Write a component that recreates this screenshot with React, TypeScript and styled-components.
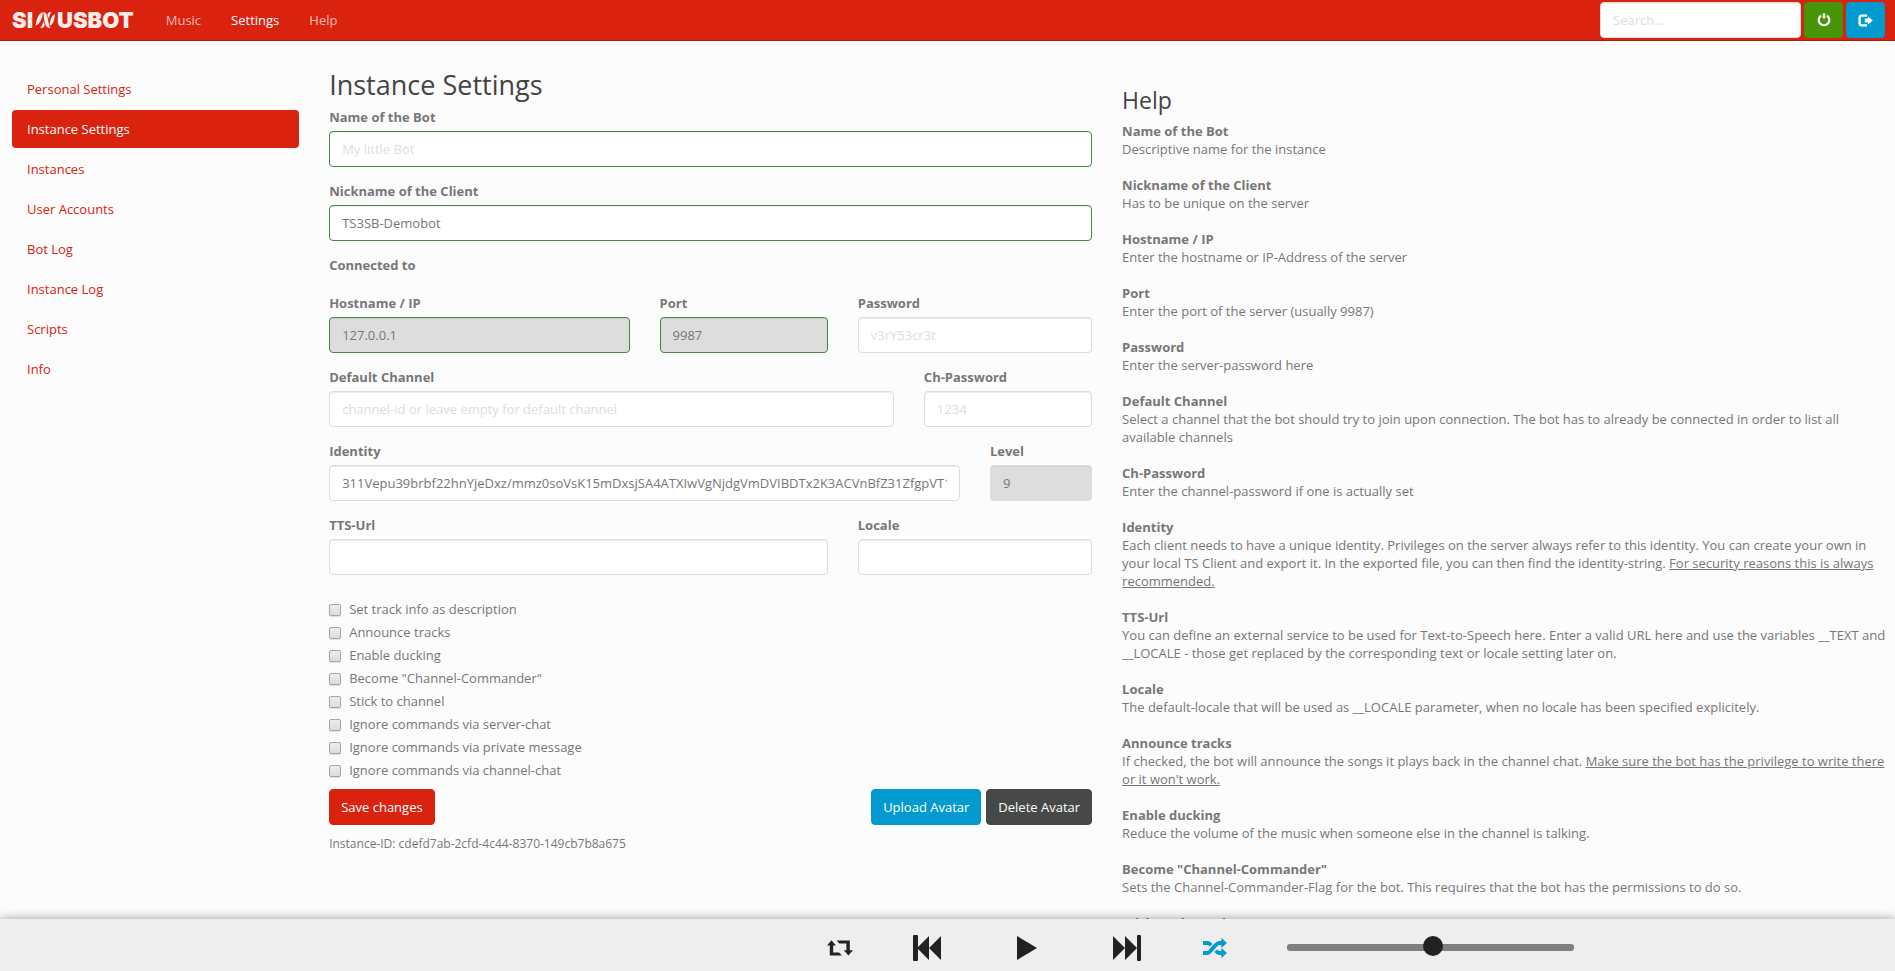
import React, { useState } from "react";
import styled, { createGlobalStyle, css } from "styled-components";

const color = {
  red: "#d9230f",
  redDark: "#a91b0c",
  green: "#469408",
  blue: "#029acf",
  dark: "#474949",
  text: "#777777",
  heading: "#444444",
  line: "#dddddd",
  valid: "#468847",
  ink: "#222222",
};

const GlobalStyle = createGlobalStyle`
  *, *::before, *::after { box-sizing: border-box; }
  body {
    margin: 0;
    background: #fcfcfc;
    color: ${color.text};
    font-family: "Open Sans", "Liberation Sans", sans-serif;
    font-size: 13px;
    line-height: 18px;
  }
  button, input { font: inherit; }
`;

const Page = styled.div`
  display: flex;
  flex-direction: column;
  height: 100vh;
`;

const Header = styled.header`
  display: flex;
  align-items: center;
  flex: none;
  padding: 2px 10px 2px 12px;
  background: ${color.red};
  border-bottom: 1px solid ${color.redDark};
`;

const Logo = styled.a`
  display: flex;
  align-items: center;
  gap: 2px;
  margin-right: 32px;
  color: #fdeeec;
  font-family: Inter, "Open Sans", sans-serif;
  font-size: 22px;
  font-weight: 900;
  line-height: 22px;
  text-decoration: none;
`;

const Nav = styled.nav`
  display: flex;
  flex: 1;
  gap: 30px;
`;

const NavLink = styled.a<{ $active?: boolean }>`
  color: ${(p) => (p.$active ? "#ffffff" : "#f7bdb7")};
  text-decoration: none;
`;

const Tools = styled.form`
  display: flex;
  gap: 3px;
`;

const Input = styled.input<{ $valid?: boolean }>`
  display: block;
  width: 100%;
  height: 36px;
  padding: 8px 12px;
  background: #ffffff;
  border: 1px solid ${(p) => (p.$valid ? color.valid : color.line)};
  border-radius: 4px;
  box-shadow: inset 0 1px 1px rgba(0, 0, 0, 0.075);
  color: ${color.text};
  outline: none;
  &::placeholder {
    color: #dddddd;
    opacity: 1;
  }
  &:disabled {
    background: #dddddd;
  }
`;

const SearchInput = styled(Input)`
  width: 201px;
`;

const buttonColors = {
  primary: color.red,
  success: color.green,
  info: color.blue,
  plain: color.dark,
};

const Button = styled.button<{ $kind: keyof typeof buttonColors }>`
  height: 36px;
  padding: 8px 11px;
  background: ${(p) => buttonColors[p.$kind]};
  border: 1px solid ${(p) => buttonColors[p.$kind]};
  border-radius: 4px;
  color: #ffffff;
  cursor: pointer;
`;

const IconButton = styled(Button)`
  display: flex;
  align-items: center;
  justify-content: center;
  width: 39px;
  padding: 0;
`;

const Main = styled.main`
  display: grid;
  grid-template-columns: repeat(12, minmax(0, 1fr));
  column-gap: 30px;
  align-items: start;
  flex: 1;
  min-height: 0;
  padding: 29px 10px 0 12px;
  overflow-y: auto;
  scrollbar-width: none;
`;

const Sidebar = styled.nav`
  grid-column: span 2;
  display: flex;
  flex-direction: column;
  gap: 2px;
`;

const Pill = styled.a<{ $active?: boolean }>`
  padding: 10px 15px;
  border-radius: 4px;
  color: ${color.red};
  text-decoration: none;
  ${(p) =>
    p.$active &&
    css`
      background: ${color.red};
      color: #ffffff;
    `}
`;

const Content = styled.section`
  grid-column: span 5;
`;

const Title = styled.h1`
  margin: 0 0 8px;
  color: ${color.heading};
  font-size: 27px;
  font-weight: 400;
  line-height: 30px;
`;

const Form = styled.form`
  display: flex;
  flex-direction: column;
  gap: 15px;
`;

const FieldRow = styled.div`
  display: grid;
  grid-template-columns: repeat(12, minmax(0, 1fr));
  column-gap: 30px;
`;

const FieldBox = styled.div<{ $span: number }>`
  grid-column: span ${(p) => p.$span};
`;

const Label = styled.label`
  display: block;
  margin-bottom: 5px;
  font-weight: 700;
`;

const GroupHeading = styled.div`
  margin-bottom: 5px;
  font-weight: 700;
`;

const Checks = styled.div`
  display: flex;
  flex-direction: column;
  align-items: flex-start;
  gap: 5px;
  margin-top: 10px;
`;

const CheckLabel = styled.label`
  display: flex;
  align-items: center;
  gap: 8px;
`;

const Checkbox = styled.input`
  appearance: none;
  width: 12px;
  height: 12px;
  margin: 2px 0 0;
  background: linear-gradient(#ededed, #dcdcdc);
  border: 1px solid #a6a6a6;
  border-radius: 2px;
  box-shadow: 0 1px 1px rgba(0, 0, 0, 0.12);
  &:checked {
    background: ${color.text};
  }
`;

const Actions = styled.div`
  display: flex;
  gap: 5px;
  margin: 10px 0;
`;

const Spacer = styled.span`
  flex: 1;
`;

const InstanceId = styled.div`
  font-size: 12px;
`;

const HelpPanel = styled.aside`
  grid-column: span 5;
  margin-right: -10px;
  padding-top: 18px;
`;

const HelpTitle = styled.h2`
  margin: 0 0 10px;
  color: ${color.heading};
  font-size: 23px;
  font-weight: 400;
  line-height: 24px;
`;

const HelpList = styled.dl`
  margin: 0;
`;

const HelpTerm = styled.dt`
  font-weight: 700;
`;

const HelpText = styled.dd`
  margin: 0 0 18px;
`;

const Player = styled.footer`
  position: relative;
  display: grid;
  grid-template-columns: 5fr auto 2fr;
  flex: none;
  height: 52px;
  background: #eeeeee;
  box-shadow: 0 0 10px rgba(0, 0, 0, 0.4);
`;

const Controls = styled.div`
  grid-column: 2;
  display: flex;
  align-items: center;
`;

const PlayerButton = styled.button<{ $wide?: boolean; $on?: boolean }>`
  display: flex;
  align-items: center;
  justify-content: center;
  width: ${(p) => (p.$wide ? 100 : 75)}px;
  height: 52px;
  padding: 6px 0 0;
  background: none;
  border: 0;
  color: ${(p) => (p.$on ? color.blue : color.ink)};
  cursor: pointer;
`;

const Volume = styled.input`
  appearance: none;
  width: 287px;
  height: 20px;
  margin: 4px 0 0 35px;
  background: none;
  &::-webkit-slider-runnable-track {
    height: 7px;
    background: #808080;
    border-radius: 3px;
  }
  &::-webkit-slider-thumb {
    appearance: none;
    width: 20px;
    height: 20px;
    margin-top: -8px;
    background: ${color.ink};
    border-radius: 50%;
  }
`;

type FieldProps = {
  id: string;
  label: string;
  span?: number;
  value?: string;
  placeholder?: string;
  valid?: boolean;
  disabled?: boolean;
};

function Field({ id, label, span = 12, value = "", placeholder, valid, disabled }: FieldProps) {
  return (
    <FieldBox $span={span}>
      <Label htmlFor={id}>{label}</Label>
      <Input
        id={id}
        type="text"
        defaultValue={value}
        placeholder={placeholder}
        disabled={disabled}
        $valid={valid}
      />
    </FieldBox>
  );
}

const PowerIcon = () => (
  <svg width="14" height="14" viewBox="0 0 14 14" fill="none" stroke="currentColor" strokeWidth="2.2">
    <path d="M4 2.6A5.3 5.3 0 1 0 10 2.6" />
    <path d="M7 0.3V5.4" strokeWidth="2.6" />
  </svg>
);

const SignOutIcon = () => (
  <svg width="15" height="13" viewBox="0 0 15 13" fill="currentColor">
    <path d="M9 1.6H3.4A2 2 0 0 0 1.6 3.4V9.6A2 2 0 0 0 3.4 11.4H9" fill="none" stroke="currentColor" strokeWidth="2.4" />
    <path d="M6.8 4.4H10V2.4L14.8 6.5L10 10.6V8.6H6.8Z" />
  </svg>
);

const RepeatIcon = () => (
  <svg width="26" height="16" viewBox="0 0 26 16" fill="currentColor">
    <path d="M4.5 0.2L9 5.4H6.2V12.4H12L15 15.4H2.8V5.4H0Z" />
    <path d="M9.6 0.4H22.8V10.2H26L21.4 15.4L16.8 10.2H19.4V3.4H12.4Z" />
  </svg>
);

const PreviousIcon = () => (
  <svg width="28" height="26" viewBox="0 0 28 26" fill="currentColor">
    <rect width="5" height="26" rx="1" />
    <path d="M4 13L16 1V25ZM16 13L28 1V25Z" />
  </svg>
);

const PlayIcon = () => (
  <svg width="20" height="24" viewBox="0 0 20 24" fill="currentColor">
    <path d="M0 0L20 12L0 24Z" />
  </svg>
);

const NextIcon = () => (
  <svg width="28" height="26" viewBox="0 0 28 26" fill="currentColor">
    <rect x="24" width="4" height="26" rx="1" />
    <path d="M24 13L12 1V25ZM12 13L0 1V25Z" />
  </svg>
);

const ShuffleIcon = () => (
  <svg width="24" height="20" viewBox="0 0 24 20" fill="none" stroke="currentColor" strokeWidth="4">
    <path d="M0 15H4.6C7.6 15 12.4 5 16 5H19.5" />
    <path d="M0 5H4.6C6 5 7 5.8 8.2 7.2M12.8 12.6C13.8 14 14.8 15 16 15H19.5" />
    <path d="M18.4 0L24 5L18.4 10ZM18.4 10L24 15L18.4 20Z" fill="currentColor" stroke="none" />
  </svg>
);

const WaveIcon = () => (
  <svg width="20" height="18" viewBox="0 0 20 18" fill="currentColor">
    <path d="M0.6 14.8C1 9.6 3 3 7.6 1C8 5.4 5.6 13 0.6 14.8Z" />
    <path d="M8.2 1.2C12 1 12.6 6 13.2 9.4C13.8 12.8 14 15.4 15.6 16.8C11.4 17.8 10.2 13.4 9.4 10C8.8 6.8 8.8 3.6 8.2 1.2Z" />
    <path d="M5.2 16.8C7 15.4 7.8 12.6 8.4 10L9.8 14.4C9 16.4 7.4 17.2 5.2 16.8Z" />
    <path d="M12.4 3.8C13 1.8 14.2 0.8 16.2 1.2C14.8 3.2 14.4 5.6 13.8 8Z" />
    <path d="M14.6 15C14.6 10.6 16.2 5 19.8 3C20 8 18.2 13.6 14.6 15Z" />
  </svg>
);

const sections = [
  "Personal Settings",
  "Instance Settings",
  "Instances",
  "User Accounts",
  "Bot Log",
  "Instance Log",
  "Scripts",
  "Info",
];

const options = [
  "Set track info as description",
  "Announce tracks",
  "Enable ducking",
  'Become "Channel-Commander"',
  "Stick to channel",
  "Ignore commands via server-chat",
  "Ignore commands via private message",
  "Ignore commands via channel-chat",
];

const help: { term: string; text: string; important?: string }[] = [
  { term: "Name of the Bot", text: "Descriptive name for the instance" },
  { term: "Nickname of the Client", text: "Has to be unique on the server" },
  { term: "Hostname / IP", text: "Enter the hostname or IP-Address of the server" },
  { term: "Port", text: "Enter the port of the server (usually 9987)" },
  { term: "Password", text: "Enter the server-password here" },
  {
    term: "Default Channel",
    text: "Select a channel that the bot should try to join upon connection. The bot has to already be connected in order to list all available channels",
  },
  { term: "Ch-Password", text: "Enter the channel-password if one is actually set" },
  {
    term: "Identity",
    text: "Each client needs to have a unique identity. Privileges on the server always refer to this identity. You can create your own in your local TS Client and export it. In the exported file, you can then find the identity-string. ",
    important: "For security reasons this is always recommended.",
  },
  {
    term: "TTS-Url",
    text: "You can define an external service to be used for Text-to-Speech here. Enter a valid URL here and use the variables __TEXT and __LOCALE - those get replaced by the corresponding text or locale setting later on.",
  },
  {
    term: "Locale",
    text: "The default-locale that will be used as __LOCALE parameter, when no locale has been specified explicitely.",
  },
  {
    term: "Announce tracks",
    text: "If checked, the bot will announce the songs it plays back in the channel chat. ",
    important: "Make sure the bot has the privilege to write there or it won't work.",
  },
  {
    term: "Enable ducking",
    text: "Reduce the volume of the music when someone else in the channel is talking.",
  },
  {
    term: 'Become "Channel-Commander"',
    text: "Sets the Channel-Commander-Flag for the bot. This requires that the bot has the permissions to do so.",
  },
  { term: "Stick to channel", text: "" },
];

export default function App() {
  const [volume, setVolume] = useState(51);

  return (
    <>
      <GlobalStyle />
      <Page>
        <Header>
          <Logo href="#" aria-label="SinusBot">
            SI
            <WaveIcon />
            USBOT
          </Logo>
          <Nav>
            <NavLink href="#music">Music</NavLink>
            <NavLink href="#settings" $active>
              Settings
            </NavLink>
            <NavLink href="#help">Help</NavLink>
          </Nav>
          <Tools>
            <SearchInput type="text" placeholder="Search..." aria-label="Search" />
            <IconButton type="button" $kind="success" aria-label="Power">
              <PowerIcon />
            </IconButton>
            <IconButton type="button" $kind="info" aria-label="Sign out">
              <SignOutIcon />
            </IconButton>
          </Tools>
        </Header>

        <Main>
          <Sidebar>
            {sections.map((name) => (
              <Pill key={name} href="#" $active={name === "Instance Settings"}>
                {name}
              </Pill>
            ))}
          </Sidebar>

          <Content>
            <Title>Instance Settings</Title>
            <Form>
              <Field id="bot-name" label="Name of the Bot" placeholder="My little Bot" valid />
              <Field id="nick" label="Nickname of the Client" value="TS3SB-Demobot" valid />
              <GroupHeading>Connected to</GroupHeading>
              <FieldRow>
                <Field id="host" label="Hostname / IP" span={5} value="127.0.0.1" valid disabled />
                <Field id="port" label="Port" span={3} value="9987" valid disabled />
                <Field id="password" label="Password" span={4} placeholder="v3rY53cr3t" />
              </FieldRow>
              <FieldRow>
                <Field
                  id="channel"
                  label="Default Channel"
                  span={9}
                  placeholder="channel-id or leave empty for default channel"
                />
                <Field id="channel-password" label="Ch-Password" span={3} placeholder="1234" />
              </FieldRow>
              <FieldRow>
                <Field
                  id="identity"
                  label="Identity"
                  span={10}
                  value="311Vepu39brbf22hnYjeDxz/mmz0soVsK15mDxsjSA4ATXIwVgNjdgVmDVIBDTx2K3ACVnBfZ31ZfgpVT1M"
                />
                <Field id="level" label="Level" span={2} value="9" disabled />
              </FieldRow>
              <FieldRow>
                <Field id="tts" label="TTS-Url" span={8} />
                <Field id="locale" label="Locale" span={4} />
              </FieldRow>
              <Checks>
                {options.map((name) => (
                  <CheckLabel key={name}>
                    <Checkbox type="checkbox" />
                    {name}
                  </CheckLabel>
                ))}
              </Checks>
            </Form>
            <Actions>
              <Button type="button" $kind="primary">
                Save changes
              </Button>
              <Spacer />
              <Button type="button" $kind="info">
                Upload Avatar
              </Button>
              <Button type="button" $kind="plain">
                Delete Avatar
              </Button>
            </Actions>
            <InstanceId>Instance-ID: cdefd7ab-2cfd-4c44-8370-149cb7b8a675</InstanceId>
          </Content>

          <HelpPanel>
            <HelpTitle>Help</HelpTitle>
            <HelpList>
              {help.map((item) => (
                <React.Fragment key={item.term}>
                  <HelpTerm>{item.term}</HelpTerm>
                  <HelpText>
                    {item.text}
                    {item.important && <u>{item.important}</u>}
                  </HelpText>
                </React.Fragment>
              ))}
            </HelpList>
          </HelpPanel>
        </Main>

        <Player>
          <Controls>
            <PlayerButton type="button" aria-label="Repeat">
              <RepeatIcon />
            </PlayerButton>
            <PlayerButton type="button" $wide aria-label="Previous">
              <PreviousIcon />
            </PlayerButton>
            <PlayerButton type="button" $wide aria-label="Play">
              <PlayIcon />
            </PlayerButton>
            <PlayerButton type="button" $wide aria-label="Next">
              <NextIcon />
            </PlayerButton>
            <PlayerButton type="button" $on aria-label="Shuffle">
              <ShuffleIcon />
            </PlayerButton>
            <Volume
              type="range"
              min={0}
              max={100}
              value={volume}
              onChange={(e) => setVolume(Number(e.target.value))}
              aria-label="Volume"
            />
          </Controls>
        </Player>
      </Page>
    </>
  );
}
